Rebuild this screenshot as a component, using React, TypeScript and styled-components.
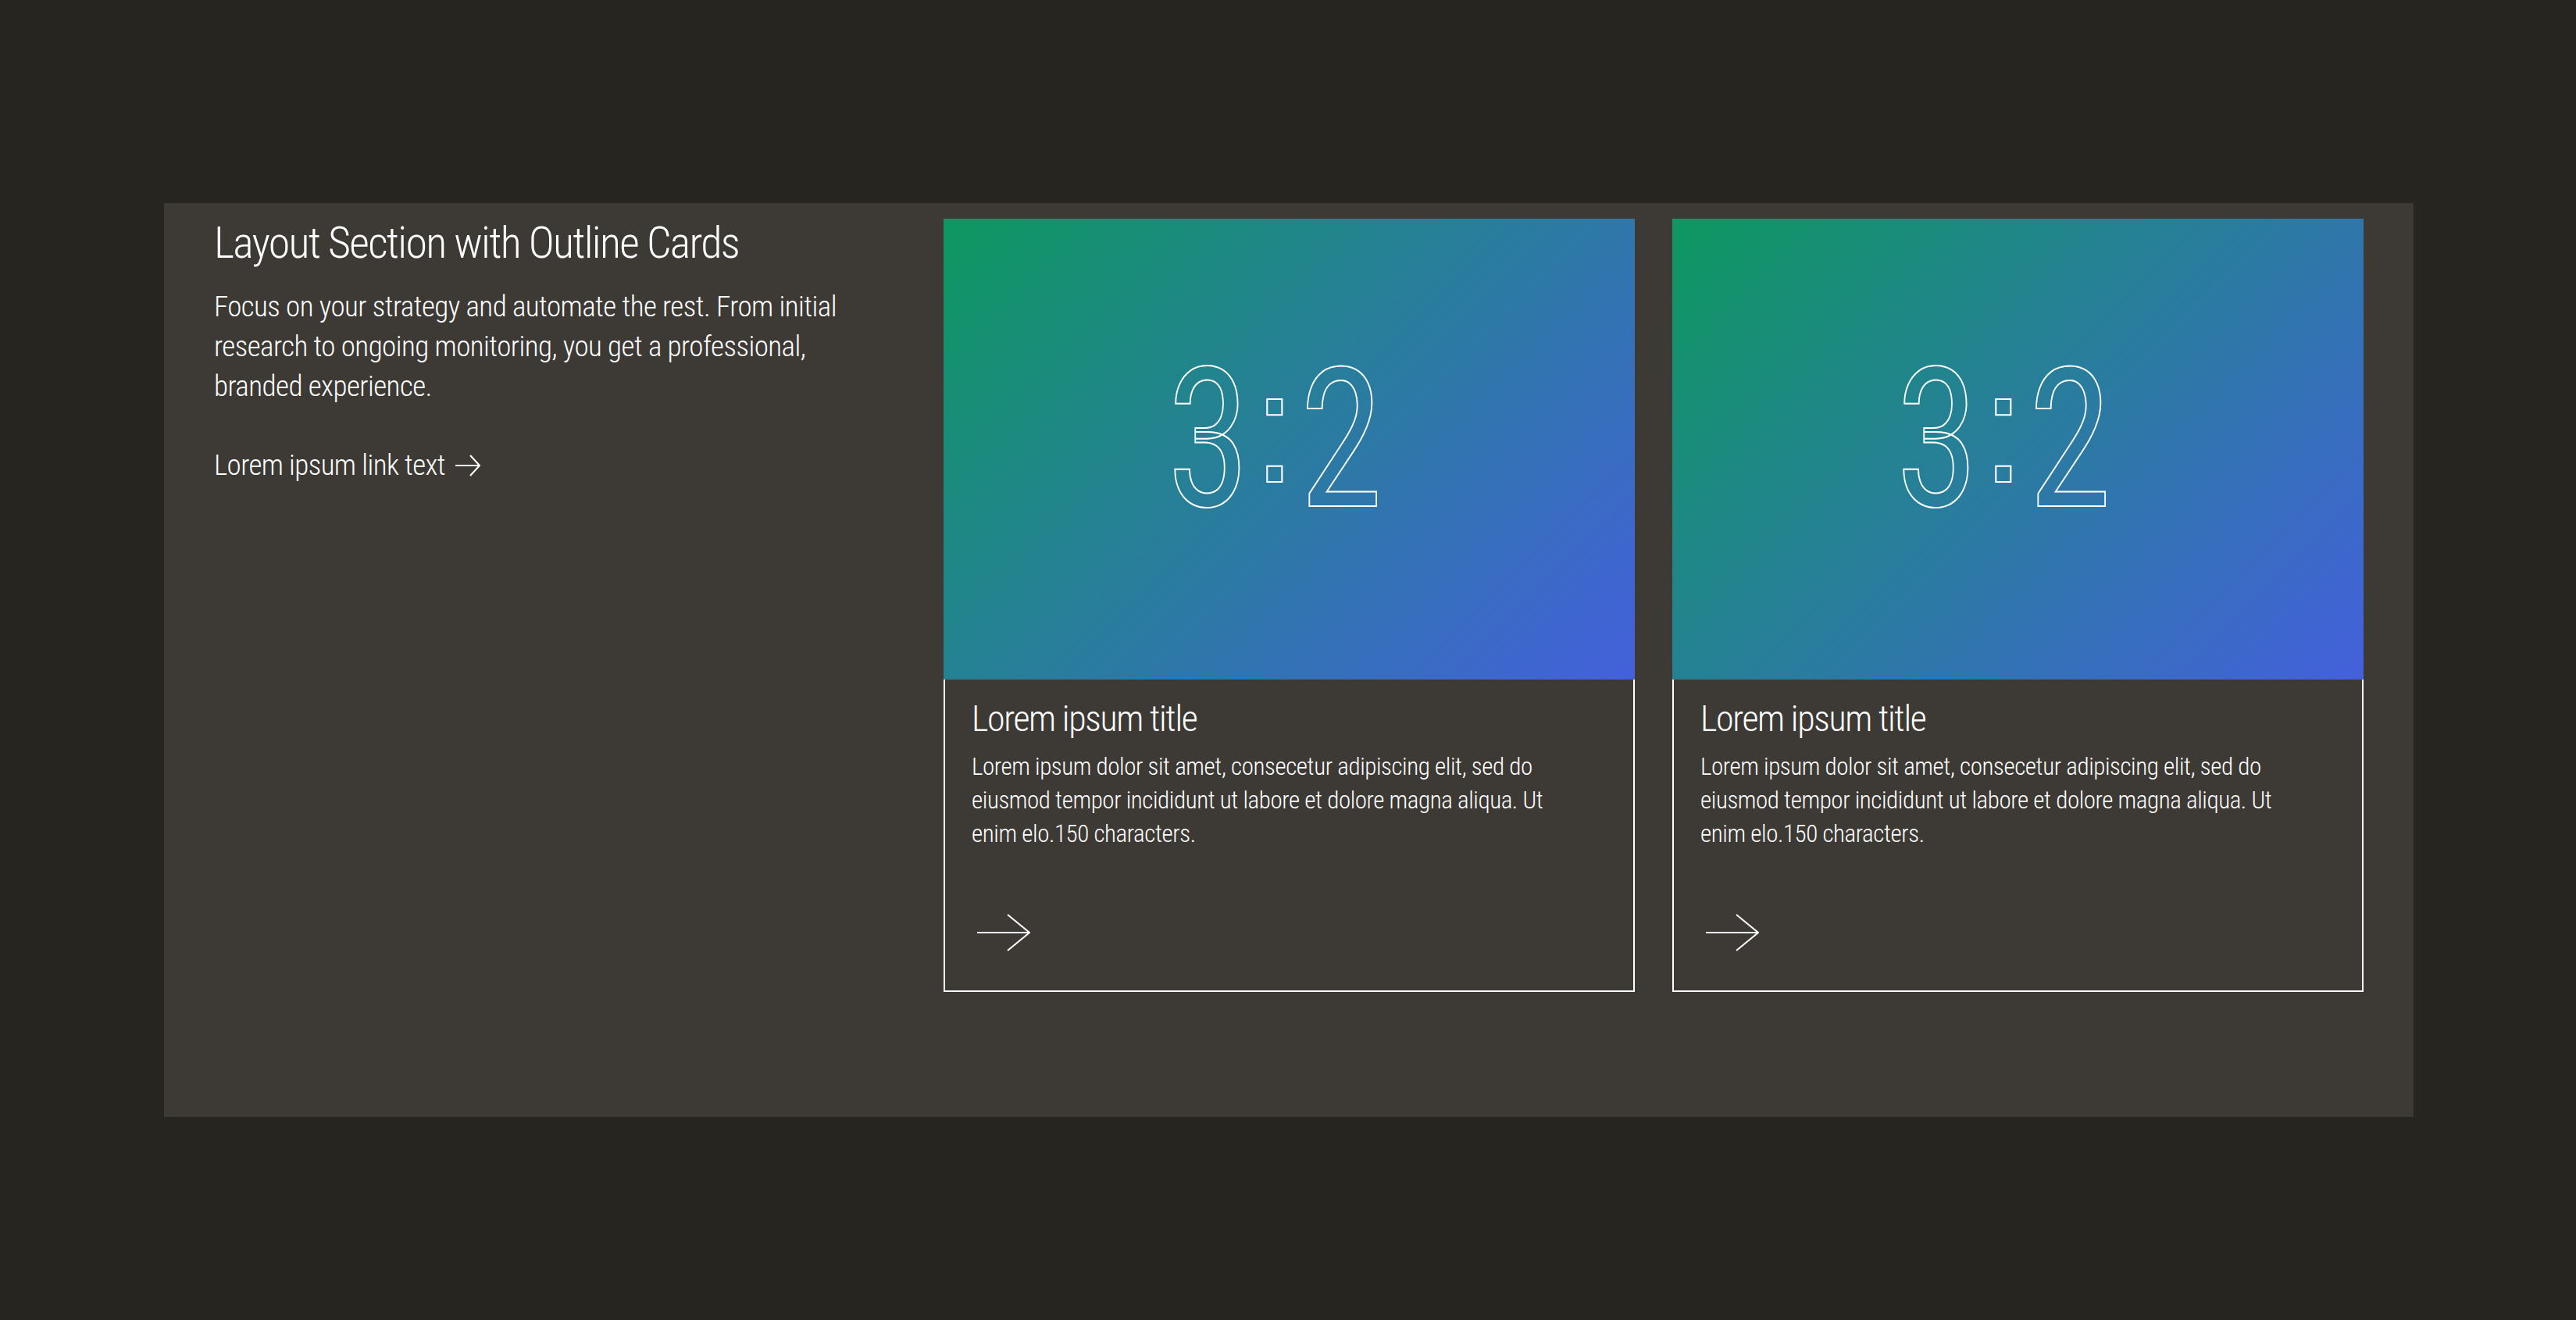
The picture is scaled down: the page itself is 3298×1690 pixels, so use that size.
import React from "react";
import styled, { createGlobalStyle } from "styled-components";

const GlobalStyle = createGlobalStyle`
  html, body { margin: 0; padding: 0; background: #262520; }
  body { font-family: Roboto, "Liberation Sans", sans-serif; color: #fff; }
`;

const Page = styled.main`
  min-height: 1690px;
  padding: 260px 0 0 210px;
  box-sizing: border-box;
`;

const Section = styled.section`
  width: 2880px;
  height: 1170px;
  box-sizing: border-box;
  background: #3d3a35;
  padding: 20px 64px 0;
  display: grid;
  grid-template-columns: 886px 885px 885px;
  column-gap: 48px;
  align-items: start;
`;

const Intro = styled.div`
  font-weight: 350;
  font-stretch: 75%;
`;

const Heading = styled.h2`
  margin: 0;
  font-size: 56px;
  line-height: 62px;
  font-weight: 320;
  letter-spacing: -1.75px;
`;

const Lead = styled.p`
  margin: 25px 0 0;
  font-size: 37px;
  line-height: 51px;
  letter-spacing: -0.55px;
`;

const TextLink = styled.a`
  margin-top: 51px;
  display: flex;
  align-items: center;
  gap: 13px;
  font-size: 37px;
  line-height: 50px;
  letter-spacing: -0.6px;
  color: #fff;
`;

const Card = styled.article`
  display: flex;
  flex-direction: column;
  height: 990px;
  box-sizing: border-box;
  border: solid #fff;
  border-width: 0 2px 2px;
`;

const Media = styled.div`
  margin: 0 -2px;
  height: 590px;
  flex: none;
  background: linear-gradient(135deg, #0e9860 0%, #4460dc 100%);
  display: flex;
  align-items: center;
  justify-content: center;
  padding: 0 43px 22px 0;
  box-sizing: border-box;
`;

const Ratio = styled.div`
  display: flex;
  align-items: baseline;
  line-height: 1;
  color: transparent;
  -webkit-text-stroke: 2px #fff;
`;

const Digit = styled.span<{ $gap: number }>`
  display: block;
  width: 100px;
  margin-right: ${(p) => p.$gap}px;
  font-size: 248px;
  font-weight: 400;
  font-stretch: 75%;
  transform: scaleX(0.87);
  transform-origin: 0 50%;
`;

const Colon = styled.span`
  display: block;
  width: 60px;
  position: relative;
  top: -31px;
  font-family: "Liberation Sans", Arial, sans-serif;
  font-size: 200px;
`;

const CardBody = styled.div`
  padding: 25px 34px 0;
  font-weight: 350;
  font-stretch: 75%;
  display: flex;
  flex-direction: column;
`;

const CardTitle = styled.h3`
  margin: 0;
  font-size: 46px;
  line-height: 50px;
  font-weight: 320;
  letter-spacing: -1.35px;
`;

const CardText = styled.p`
  margin: 15px 0 0;
  font-size: 31px;
  line-height: 43px;
  letter-spacing: -0.42px;
`;

const CardArrow = styled.svg`
  display: block;
  width: 68px;
  height: 48px;
  margin: 81px 0 0 7px;
  fill: none;
  stroke: #fff;
  stroke-width: 2;
`;

const LinkArrow = styled.svg`
  display: block;
  flex: none;
  width: 32px;
  height: 28px;
  fill: none;
  stroke: #fff;
  stroke-width: 2;
`;

const cards = ["a", "b"];

export default function App() {
  return (
    <Page>
      <GlobalStyle />
      <Section>
        <Intro>
          <Heading>Layout Section with Outline Cards</Heading>
          <Lead>
            Focus on your strategy and automate the rest. From initial
            <br />
            research to ongoing monitoring, you get a professional,
            <br />
            branded experience.
          </Lead>
          <TextLink>
            Lorem ipsum link text
            <LinkArrow viewBox="0 0 32 28">
              <path d="M0 14H31M19 1L31 14L19 27" />
            </LinkArrow>
          </TextLink>
        </Intro>
        {cards.map((id) => (
          <Card key={id}>
            <Media>
              <Ratio>
                <Digit $gap={10}>3</Digit>
                <Colon>:</Colon>
                <Digit $gap={0}>2</Digit>
              </Ratio>
            </Media>
            <CardBody>
              <CardTitle>Lorem ipsum title</CardTitle>
              <CardText>
                Lorem ipsum dolor sit amet, consecetur adipiscing elit, sed do
                <br />
                eiusmod tempor incididunt ut labore et dolore magna aliqua. Ut
                <br />
                enim elo.150 characters.
              </CardText>
              <CardArrow viewBox="0 0 68 48">
                <path d="M0 24H67M39 1L67 24L39 47" />
              </CardArrow>
            </CardBody>
          </Card>
        ))}
      </Section>
    </Page>
  );
}
